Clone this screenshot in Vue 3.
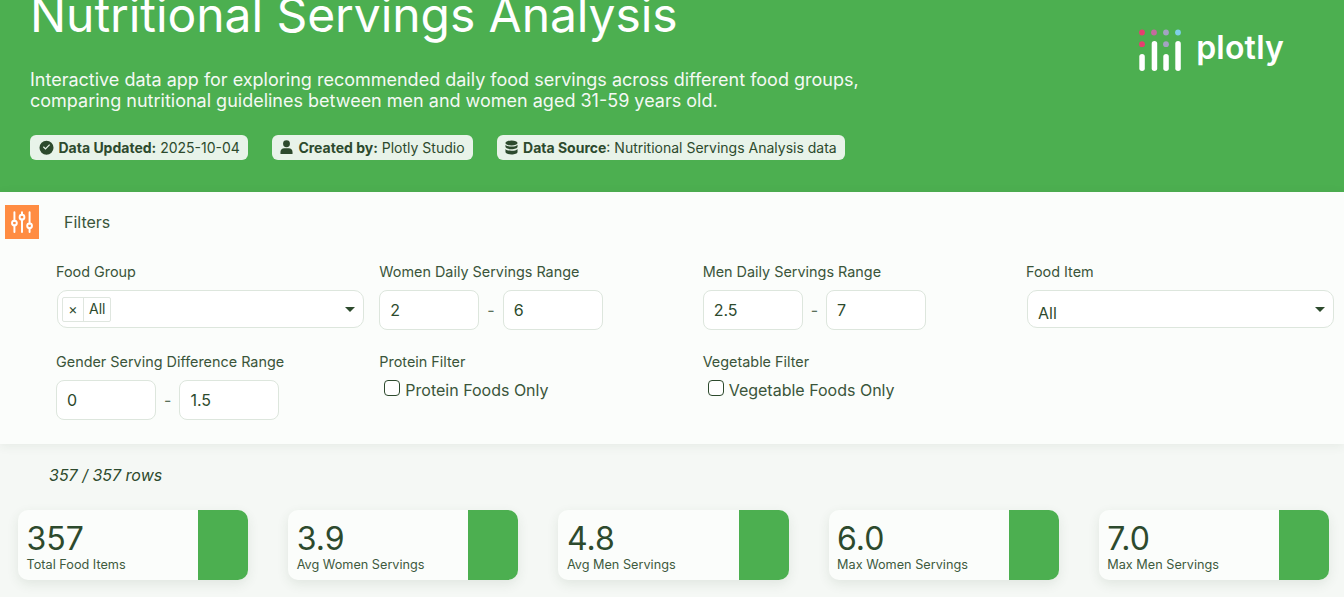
<template>
  <div class="page">
    <header class="banner">
      <div class="bannerText">
        <h1 class="title">Nutritional Servings Analysis</h1>
        <p class="desc">
          Interactive data app for exploring recommended daily food servings across different food groups,<br />
          comparing nutritional guidelines between men and women aged 31-59 years old.
        </p>
        <div class="badges">
          <div class="badge">
            <svg class="badgeIcon" viewBox="0 0 16 16"><path fill="#2d4a2d" fill-rule="evenodd" d="M8 .5a7.500 7.500 0 1 1 0 15 7.500 7.500 0 0 1 0-15zm3.800 4.700-.9-.9L6.900 8.300 5.100 6.500l-.9.9 2.700 2.800z" transform="translate(0 .2)" /></svg>
            <b>Data Updated:</b>&nbsp;2025-10-04
          </div>
          <div class="badge">
            <svg class="badgeIcon badgeIconNarrow" viewBox="1 0 14 16"><circle cx="8" cy="4" r="3.700" fill="#2d4a2d" /><path fill="#2d4a2d" d="M1.500 15v-2.200C1.500 10.500 3.300 8.800 5.500 8.800h5c2.200 0 4 1.700 4 4V15z" /></svg>
            <b>Created by:</b>&nbsp;Plotly Studio
          </div>
          <div class="badge">
            <svg class="badgeIcon badgeIconNarrow" viewBox="1 0 14 16"><g fill="#2d4a2d"><ellipse cx="8" cy="3.200" rx="6.500" ry="2.700" /><path d="M1.500 5v2.300C1.500 8.800 4.400 10 8 10s6.500-1.200 6.500-2.700V5C13.500 6.300 11 7 8 7S2.500 6.300 1.500 5z" /><path d="M1.500 9.500v3.300C1.500 14.300 4.400 15.500 8 15.500s6.500-1.200 6.500-2.700V9.500c-1 1.300-3.500 2-6.500 2s-5.500-.7-6.500-2z" /></g></svg>
            <b>Data Source</b>:&nbsp;Nutritional Servings Analysis data
          </div>
        </div>
      </div>
      <div class="logo">
        <svg class="logoMark" viewBox="0 0 42 42" width="42" height="42">
          <circle cx="3" cy="3.500" r="2.900" fill="#e83e6f" />
          <circle cx="15" cy="3.500" r="2.900" fill="#c46a9e" />
          <circle cx="27" cy="3.500" r="2.900" fill="#a3a3c2" />
          <circle cx="39" cy="3.500" r="2.900" fill="#7fd0e8" />
          <circle cx="3" cy="15.200" r="2.900" fill="#e83e6f" />
          <circle cx="27" cy="15.200" r="2.900" fill="#a3a3c2" />
          <g fill="#fff">
            <rect x="0.300" y="25" width="5.500" height="17" rx="2.750" />
            <rect x="12.700" y="12" width="5.500" height="30" rx="2.750" />
            <rect x="24.300" y="25" width="5.500" height="17" rx="2.750" />
            <rect x="36.300" y="12" width="5.500" height="30" rx="2.750" />
          </g>
        </svg>
        <span class="logoWord">plotly</span>
      </div>
    </header>

    <section class="filters">
      <div class="filtersHead">
        <div class="filtersIcon">
          <svg viewBox="0 0 24 24" width="26" height="26" fill="none" stroke="#fff" stroke-width="1.800" stroke-linecap="round">
            <path d="M5 3v7.800M5 15.200v6M12 3v2.300M12 9.700v11.500M19 3v10.300M19 17.700v3.500" />
            <circle cx="5" cy="13" r="2.200" />
            <circle cx="12" cy="7.500" r="2.200" />
            <circle cx="19" cy="15.500" r="2.200" />
          </svg>
        </div>
        <span class="filtersTitle">Filters</span>
      </div>

      <div class="filterGrid">
        <div class="field">
          <label class="fieldLabel">Food Group</label>
          <div class="select">
            <span class="chip"><span class="chipX">×</span><span class="chipText">All</span></span>
            <span class="caret"></span>
          </div>
        </div>
        <div v-for="range in topRanges" :key="range.label" class="field">
          <label class="fieldLabel">{{ range.label }}</label>
          <div class="rangeRow">
            <div class="numInput">{{ range.min }}</div>
            <span class="dash">-</span>
            <div class="numInput">{{ range.max }}</div>
          </div>
        </div>
        <div class="field">
          <label class="fieldLabel">Food Item</label>
          <div class="select selectPlain">
            <span class="plainValue">All</span>
            <span class="caret"></span>
          </div>
        </div>

        <div class="field">
          <label class="fieldLabel">Gender Serving Difference Range</label>
          <div class="rangeRow">
            <div class="numInput">0</div>
            <span class="dash">-</span>
            <div class="numInput">1.5</div>
          </div>
        </div>
        <div v-for="check in checks" :key="check.label" class="field">
          <label class="fieldLabel">{{ check.label }}</label>
          <div class="checkRow">
            <span class="checkBox"></span>
            <span>{{ check.text }}</span>
          </div>
        </div>
      </div>
    </section>

    <p class="rowCount">357 / 357 rows</p>

    <div class="cards">
      <div v-for="card in cards" :key="card.label" class="card">
        <div class="cardBody">
          <div class="cardValue">{{ card.value }}</div>
          <div class="cardLabel">{{ card.label }}</div>
        </div>
        <div class="cardSide"></div>
      </div>
    </div>
  </div>
</template>

<script setup>
const topRanges = [
  { label: 'Women Daily Servings Range', min: '2', max: '6' },
  { label: 'Men Daily Servings Range', min: '2.5', max: '7' },
]

const checks = [
  { label: 'Protein Filter', text: 'Protein Foods Only' },
  { label: 'Vegetable Filter', text: 'Vegetable Foods Only' },
]

const cards = [
  { value: '357', label: 'Total Food Items' },
  { value: '3.9', label: 'Avg Women Servings' },
  { value: '4.8', label: 'Avg Men Servings' },
  { value: '6.0', label: 'Max Women Servings' },
  { value: '7.0', label: 'Max Men Servings' },
]
</script>

<style>
html,
body {
  margin: 0;
  height: 597px;
  overflow: hidden;
  background: #f5f8f5;
}
</style>

<style scoped>
.page {
  font-family: Inter, "Liberation Sans", sans-serif;
  color: #2d4a2d;
  background: #f5f8f5;
  /* the shot is scrolled down a bit, the title is cut at the top */
  margin-top: -24px;
}

.banner {
  height: 216px;
  box-sizing: border-box;
  background: #4caf50;
  padding: 0 30px;
  display: flex;
  justify-content: space-between;
}

.title {
  margin: 0;
  padding-top: 10px;
  font-size: 48px;
  line-height: 58px;
  font-weight: 400;
  letter-spacing: -0.07px;
  color: #fff;
}

.desc {
  margin: 25px 0 0;
  font-size: 18px;
  line-height: 21px;
  color: #f4f9f4;
}

.badges {
  display: flex;
  gap: 23.500px;
  margin-top: 24px;
}

.badge {
  display: flex;
  align-items: center;
  height: 25px;
  padding: 0 8.500px;
  border-radius: 6px;
  background: #e8f3e9;
  font-size: 14px;
  color: #2d4a2d;
  white-space: nowrap;
}

.badge b {
  font-weight: 700;
}

.badgeIcon {
  width: 15px;
  height: 15px;
  margin-right: 5px;
}

.badgeIconNarrow {
  width: 13px;
}

.logo {
  display: flex;
  align-items: flex-start;
  gap: 15px;
  margin: 53px 30px 0 0;
}

.logoWord {
  font-size: 32px;
  font-weight: 600;
  letter-spacing: 0.2px;
  line-height: 34px;
  color: #fff;
  margin-top: 2px;
}

.filters {
  height: 252px;
  box-sizing: border-box;
  background: #fbfdfb;
  box-shadow: 0 2px 10px rgb(45 74 45 / 0.08);
  padding: 13px 10px 0 5px;
}

.filtersHead {
  display: flex;
  align-items: center;
  gap: 25px;
}

.filtersIcon {
  width: 34px;
  height: 34px;
  background: #ff8c42;
  display: flex;
  align-items: center;
  justify-content: center;
}

.filtersTitle {
  font-size: 16px;
  color: #3a553a;
}

.filterGrid {
  display: grid;
  grid-template-columns: repeat(4, 323.33px);
  grid-auto-rows: 90px;
  margin: 23px 0 0 51px;
}

.fieldLabel {
  display: block;
  font-size: 14.400px;
  line-height: 20px;
  margin-bottom: 8px;
  color: #3a553a;
}

.select {
  width: 307px;
  height: 38px;
  box-sizing: border-box;
  margin: 1px 0 0 1px;
  background: #fff;
  border: 1px solid #dde6dd;
  border-radius: 10px;
  display: flex;
  align-items: center;
  justify-content: space-between;
  padding: 0 8px 0 4px;
}

.selectPlain {
  padding-left: 10px;
}

.chip {
  display: flex;
  height: 25px;
  box-sizing: border-box;
  border: 1px solid #dfe6df;
  border-radius: 2px;
  font-size: 14px;
  line-height: 22px;
}

.chipX {
  width: 20px;
  text-align: center;
  border-right: 1px solid #dfe6df;
}

.chipText {
  padding: 0 5px;
}

.plainValue {
  font-size: 16px;
  margin-top: 7px;
}

.caret {
  width: 0;
  height: 0;
  border-left: 5px solid transparent;
  border-right: 5px solid transparent;
  border-top: 5px solid #2d4a2d;
}

.rangeRow {
  display: flex;
  align-items: center;
}

.numInput {
  width: 100px;
  height: 40px;
  box-sizing: border-box;
  background: #fff;
  border: 1px solid #dde6dd;
  border-radius: 8px;
  padding-left: 10px;
  font-size: 16px;
  line-height: 38px;
}

.dash {
  width: 23.400px;
  text-align: center;
  font-size: 16px;
  color: #5a705a;
}

.checkRow {
  display: flex;
  align-items: center;
  font-size: 16px;
  line-height: 24px;
  margin-top: -2px;
  padding-left: 5px;
  gap: 5px;
  color: #3a553a;
}

.checkBox {
  width: 16px;
  height: 16px;
  box-sizing: border-box;
  border: 1.500px solid #2d4a2d;
  border-radius: 4px;
  background: #fff;
  margin-top: -4px;
}

.rowCount {
  margin: 21px 0 0 49px;
  font-size: 16px;
  line-height: 20px;
  font-style: italic;
}

.cards {
  display: flex;
  justify-content: space-between;
  width: 1311px;
  margin: 25px 0 0 18px;
}

.card {
  width: 230.250px;
  height: 70px;
  display: flex;
  background: #fbfdfb;
  border-radius: 10px;
  overflow: hidden;
  box-shadow: 0 4px 12px rgb(45 74 45 / 0.1);
}

.cardBody {
  flex: 1;
  padding: 10px 0 0 9px;
}

.cardValue {
  font-size: 32px;
  line-height: 37px;
  margin-left: -0.500px;
}

.cardLabel {
  font-size: 12.700px;
  line-height: 15px;
  color: #3e5a3e;
  margin-left: -0.500px;
}

.cardSide {
  width: 50px;
  background: #4caf50;
}
</style>
